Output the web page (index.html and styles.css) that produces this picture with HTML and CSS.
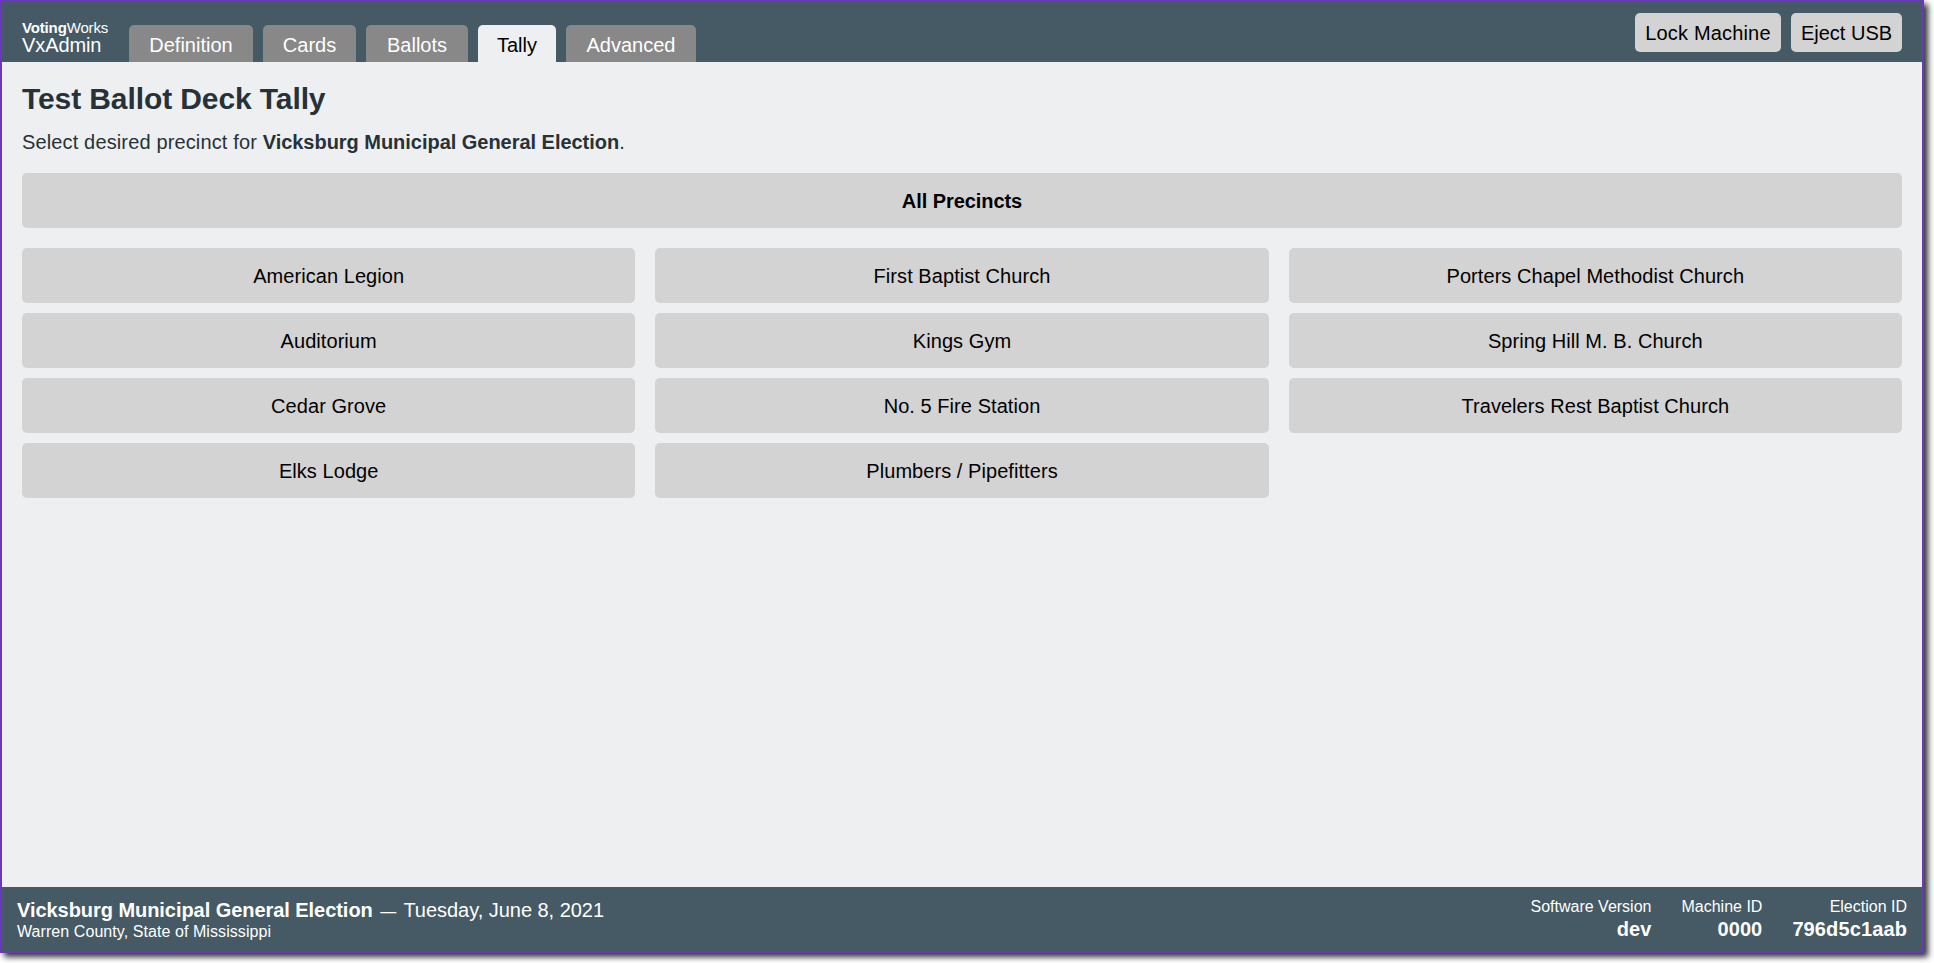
FILE: index.html
```html
<!DOCTYPE html>
<html lang="en">
<head>
<meta charset="utf-8">
<title>VxAdmin</title>
<link rel="stylesheet" href="styles.css">
</head>
<body>
<div class="app">
  <header class="navbar">
    <div class="brand">
      <div class="brand-company"><strong>Voting</strong>Works</div>
      <div class="brand-product">VxAdmin</div>
    </div>
    <nav class="tabs">
      <button class="tab tab-definition">Definition</button>
      <button class="tab tab-cards">Cards</button>
      <button class="tab tab-ballots">Ballots</button>
      <button class="tab tab-tally active">Tally</button>
      <button class="tab tab-advanced">Advanced</button>
    </nav>
    <div class="actions">
      <button class="action action-lock">Lock Machine</button>
      <button class="action action-eject">Eject USB</button>
    </div>
  </header>
  <main class="main">
    <h1 class="title">Test Ballot Deck Tally</h1>
    <p class="intro">Select desired precinct for <strong>Vicksburg Municipal General Election</strong>.</p>
    <button class="precinct all">All Precincts</button>
    <div class="precincts">
      <button class="precinct">American Legion</button>
      <button class="precinct">Auditorium</button>
      <button class="precinct">Cedar Grove</button>
      <button class="precinct">Elks Lodge</button>
      <button class="precinct">First Baptist Church</button>
      <button class="precinct">Kings Gym</button>
      <button class="precinct">No. 5 Fire Station</button>
      <button class="precinct">Plumbers / Pipefitters</button>
      <button class="precinct">Porters Chapel Methodist Church</button>
      <button class="precinct">Spring Hill M. B. Church</button>
      <button class="precinct">Travelers Rest Baptist Church</button>
    </div>
  </main>
  <footer class="footer">
    <div class="election">
      <div class="election-name"><strong>Vicksburg Municipal General Election</strong> <span class="dash">—</span> Tuesday, June 8, 2021</div>
      <div class="election-place">Warren County, State of Mississippi</div>
    </div>
    <div class="meta"><div class="meta-label">Software Version</div><div class="meta-value">dev</div></div>
    <div class="meta"><div class="meta-label">Machine ID</div><div class="meta-value">0000</div></div>
    <div class="meta"><div class="meta-label">Election ID</div><div class="meta-value">796d5c1aab</div></div>
  </footer>
</div>
</body>
</html>
```
FILE: styles.css
```css
* { box-sizing: border-box; }
html { background: #fff; overflow: hidden; }
body {
  margin: 0;
  height: 963px;
  overflow: hidden;
  font: 20px/26px "Liberation Sans", Arial, sans-serif;
  color: #263238;
}
button {
  border: 0;
  margin: 0;
  padding: 0;
  font: inherit;
  color: #000;
  white-space: nowrap;
}
.app {
  width: 1924px;
  height: 953px;
  border: 2px solid #673ab7;
  background: #edeff0;
  box-shadow: 4px 4px 6px rgba(0, 0, 0, 0.8);
  display: flex;
  flex-direction: column;
}
.navbar {
  height: 60px;
  flex: none;
  display: flex;
  padding: 0 20px;
  background: #455a64;
  color: #fff;
}
.brand { width: 107px; padding-top: 15px; white-space: nowrap; }
.brand-company { font-size: 15px; line-height: 21px; height: 18px; letter-spacing: -0.15px; }
.brand-product { line-height: 20px; letter-spacing: -0.1px; }
.tabs { display: flex; gap: 10px; align-items: flex-end; }
.tab {
  height: 37px;
  border-radius: 5px 5px 0 0;
  background: #888;
  color: #fff;
  padding-top: 2px;
}
.tab.active { background: #edeff0; color: #000; }
.tab-definition { width: 124px; }
.tab-cards { width: 93px; }
.tab-ballots { width: 102px; }
.tab-tally { width: 78px; }
.tab-advanced { width: 130px; }
.actions { margin-left: auto; display: flex; gap: 10px; padding-top: 11px; }
.action { height: 39px; border-radius: 5px; background: #d3d3d3; }
.action-lock { width: 146px; letter-spacing: 0.17px; }
.action-eject { width: 111px; }
.main { flex: 1; padding: 17px 20px 0; }
.title { margin: 0; font-size: 30px; line-height: 40px; letter-spacing: -0.1px; }
.intro { margin: 10px 0 18px; letter-spacing: 0.14px; }
.intro strong { letter-spacing: -0.03px; }
.precinct { display: block; width: 100%; height: 55px; border-radius: 5px; background: #d3d3d3; letter-spacing: 0.06px; }
.all { font-weight: bold; margin-bottom: 20px; letter-spacing: -0.06px; }
.precincts {
  display: grid;
  grid-template-rows: repeat(4, 55px);
  grid-auto-flow: column;
  grid-auto-columns: 1fr;
  gap: 10px 20px;
}
.footer {
  height: 64px;
  flex: none;
  display: flex;
  gap: 30px;
  padding: 10px 15px 0;
  background: #455a64;
  color: #fff;
  white-space: nowrap;
}
.election { margin-right: auto; }
.election-name { line-height: 26px; }
.election-name strong { letter-spacing: -0.05px; }
.dash { display: inline-block; width: 20px; font-size: 16px; line-height: 20px; text-align: center; }
.election-name { letter-spacing: -0.03px; }
.election-place { font-size: 16px; line-height: 18px; letter-spacing: 0.07px; }
.meta { text-align: right; padding-top: 1px; }
.meta-label { font-size: 16px; line-height: 18px; }
.meta-value { font-weight: bold; line-height: 26px; letter-spacing: 0.12px; }
```
